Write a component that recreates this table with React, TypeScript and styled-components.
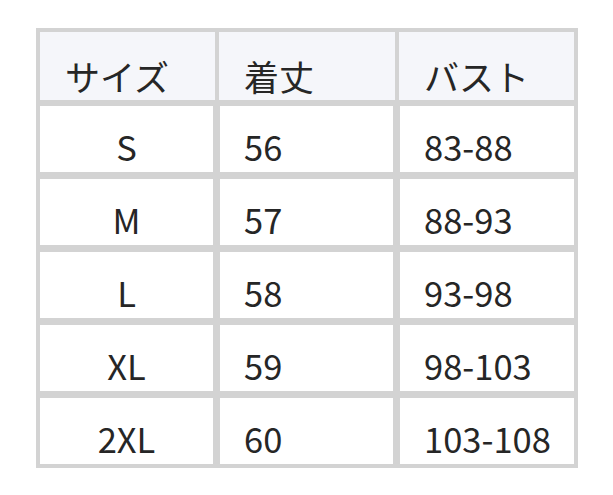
import React from 'react'
import styled, { createGlobalStyle } from 'styled-components'

const GlobalStyle = createGlobalStyle`
  body {
    margin: 0;
    background: #ffffff;
    font-family: "Noto Sans CJK JP", "Noto Sans", sans-serif;
    color: #262626;
  }
`

const headers = ['サイズ', '着丈', 'バスト']

const rows = [
  ['S', '56', '83-88'],
  ['M', '57', '88-93'],
  ['L', '58', '93-98'],
  ['XL', '59', '98-103'],
  ['2XL', '60', '103-108'],
]

const App = () => (
  <>
    <GlobalStyle />
    <Page>
      <SizeTable role="table">
        {headers.map((h, i) => (
          <HeadCell key={h} role="columnheader" first={i === 0} last={i === headers.length - 1}>
            {h}
          </HeadCell>
        ))}
        {rows.map(row =>
          row.map((value, i) => (
            <Cell key={row[0] + i} role="cell" center={i === 0}>
              {value}
            </Cell>
          ))
        )}
      </SizeTable>
    </Page>
  </>
)

const Page = styled.div`
  padding: 28px 0 0 36px;
`
const SizeTable = styled.div`
  display: grid;
  width: 542px;
  box-sizing: border-box;
  grid-template-columns: 173px 173px 174px;
  grid-template-rows: 67px repeat(5, 66px);
  gap: 7px;
  padding: 4px;
  background: #d3d3d3;
`
const HeadCell = styled.div<{ first: boolean; last: boolean }>`
  display: flex;
  align-items: flex-end;
  margin-left: ${({ first }) => (first ? 0 : -1)}px;
  margin-right: ${({ last }) => (last ? 0 : -2)}px;
  margin-bottom: -1px;
  padding: 0 0 7px 25px;
  background: #f5f6fa;
  font-size: 35px;
  font-weight: 400;
  line-height: 35px;
`
const Cell = styled.div<{ center: boolean }>`
  display: flex;
  align-items: flex-end;
  justify-content: ${({ center }) => (center ? 'center' : 'flex-start')};
  padding: 0 0 9px ${({ center }) => (center ? 0 : 24)}px;
  background: #ffffff;
  font-size: 34.5px;
  font-weight: 400;
  line-height: 34px;
`

export default App
